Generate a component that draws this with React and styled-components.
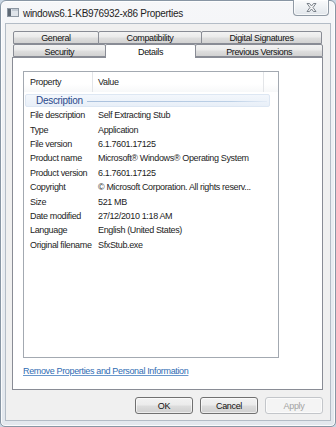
import React from "react";
import styled, { createGlobalStyle } from "styled-components";

const GlobalStyle = createGlobalStyle`
  html, body { margin: 0; padding: 0; }
  body {
    width: 336px;
    height: 427px;
    overflow: hidden;
    background: #c9d6e3;
    font-family: "Liberation Sans", Arial, sans-serif;
    font-size: 9px;
    letter-spacing: -0.35px;
    color: #1b1b1b;
  }
  * { box-sizing: border-box; }
`;

const Window = styled.div`
  width: 336px;
  height: 427px;
  border: 1px solid #8896a4;
  border-radius: 6px 6px 5px 5px;
  background: linear-gradient(180deg, #f6f7f9 0%, #eceff3 40%, #e3e8ee 100%);
  box-shadow: inset 0 0 0 1px rgba(255, 255, 255, 0.8);
  display: flex;
  flex-direction: column;
  padding: 0 4px 5px 4px;
`;

const TitleBar = styled.div`
  height: 22px;
  display: flex;
  align-items: center;
  padding-left: 2px;
  gap: 4px;
`;

const TitleText = styled.div`
  font-size: 10px;
  letter-spacing: -0.3px;
  color: #1e1e1e;
  padding-top: 2px;
`;

const CloseButton = styled.div`
  margin-left: auto;
  margin-right: 2px;
  align-self: flex-start;
  width: 36px;
  height: 16px;
  margin-top: -1px;
  border: 1px solid #909aa5;
  border-top: none;
  border-radius: 0 0 4px 4px;
  background: linear-gradient(180deg, #fafbfc 0%, #eef1f4 50%, #e1e6eb 100%);
  box-shadow: inset 0 0 0 1px rgba(255, 255, 255, 0.7);
  display: flex;
  align-items: center;
  justify-content: center;
`;

const Client = styled.div`
  flex: 1;
  display: flex;
  flex-direction: column;
  background: #f0f0f0;
  border: 1px solid #b3bcc6;
  padding: 7px 7px 6px 6px;
`;

const TabRow = styled.div`
  height: 13px;
  display: flex;
  align-items: flex-end;
  padding-left: 1px;
  position: relative;
  z-index: ${(p) => (p.$front ? 2 : 1)};
`;

const Tab = styled.div`
  width: ${(p) => p.$w}px;
  height: ${(p) => (p.$selected ? 14 : 13)}px;
  margin-left: ${(p) => (p.$first ? 0 : -1)}px;
  margin-bottom: ${(p) => (p.$selected ? -1 : 0)}px;
  border: 1px solid #898c95;
  border-bottom: ${(p) => (p.$selected ? "none" : "1px solid #898c95")};
  border-radius: 2px 2px 0 0;
  background: ${(p) =>
    p.$selected
      ? "#ffffff"
      : "linear-gradient(180deg, #f3f3f3 0%, #ebebeb 45%, #dedede 55%, #d2d2d2 100%)"};
  position: relative;
  z-index: ${(p) => (p.$selected ? 3 : 1)};
  display: flex;
  align-items: center;
  justify-content: center;
  line-height: 11px;
  padding-top: ${(p) => p.$drop}px;
  color: #111;
  white-space: nowrap;
`;

const Panel = styled.div`
  flex: 1;
  background: #ffffff;
  border: 1px solid #898c95;
  padding: 13px 10px 0 10px;
  display: flex;
  flex-direction: column;
`;

const ListView = styled.div`
  width: 256px;
  height: 287px;
  border: 1px solid #a3a9b1;
  background: #fff;
  display: flex;
  flex-direction: column;
  overflow: hidden;
`;

const HeaderRow = styled.div`
  height: 20px;
  display: grid;
  grid-template-columns: 69px 171px 1fr;
  background: linear-gradient(180deg, #ffffff 0%, #ffffff 60%, #f7f8f9 100%);
`;

const HeaderCell = styled.div`
  display: flex;
  align-items: center;
  padding-left: ${(p) => p.$pad}px;
  border-right: ${(p) => (p.$last ? "none" : "1px solid #e3e5e8")};
  color: #222;
`;

const GroupRow = styled.div`
  height: 13px;
  margin: 2px 8px 1px 1px;
  display: flex;
  align-items: center;
  padding-left: 10px;
  background: linear-gradient(180deg, #f3f7fc 0%, #e8eff8 100%);
  border: 1px solid #dde7f3;
  border-radius: 2px;
`;

const GroupTitle = styled.span`
  font-size: 10px;
  letter-spacing: -0.3px;
  color: #2a4a8c;
`;

const GroupLine = styled.div`
  flex: 1;
  height: 1px;
  margin: 1px 2px 0 4px;
  background: linear-gradient(90deg, #a9c0dc 0%, #bcd0e6 80%, rgba(188, 208, 230, 0.2) 100%);
`;

const DataRow = styled.div`
  height: 14.4px;
  display: grid;
  grid-template-columns: 69px 170px;
  align-items: center;
  white-space: nowrap;
`;

const Cell = styled.div`
  padding-left: ${(p) => p.$pad}px;
  overflow: hidden;
  color: #1d1d1d;
`;

const RemoveLink = styled.a`
  margin-top: 7px;
  line-height: 12px;
  color: #2f6cb3;
  text-decoration: underline;
  text-decoration-color: #6a98cc;
  cursor: pointer;
  align-self: flex-start;
`;

const ButtonRow = styled.div`
  margin-top: 7px;
  display: flex;
  justify-content: flex-end;
  gap: 7px;
`;

const Button = styled.button`
  width: 58px;
  height: 17px;
  padding: 0;
  font-family: inherit;
  font-size: 9px;
  letter-spacing: -0.35px;
  border-radius: 3px;
  border: 1px solid ${(p) => (p.disabled ? "#c3c6ca" : "#707070")};
  color: ${(p) => (p.disabled ? "#a3a3a3" : "#111")};
  background: ${(p) =>
    p.disabled
      ? "#f4f4f4"
      : "linear-gradient(180deg, #f2f2f2 0%, #ebebeb 48%, #dddddd 52%, #cfcfcf 100%)"};
  box-shadow: inset 0 0 0 1px rgba(255, 255, 255, 0.6);
`;

const rows = [
  ["File description", "Self Extracting Stub"],
  ["Type", "Application"],
  ["File version", "6.1.7601.17125"],
  ["Product name", "Microsoft® Windows® Operating System"],
  ["Product version", "6.1.7601.17125"],
  ["Copyright", "© Microsoft Corporation. All rights reserv..."],
  ["Size", "521 MB"],
  ["Date modified", "27/12/2010 1:18 AM"],
  ["Language", "English (United States)"],
  ["Original filename", "SfxStub.exe"],
];

const WindowIcon = () => (
  <svg width="12" height="9" viewBox="0 0 12 9">
    <rect x="0.5" y="0.5" width="11" height="8" fill="#dfe4ea" stroke="#8d97a2" />
    <rect x="1" y="1" width="3" height="7" fill="#5d6874" />
    <rect x="5" y="1" width="6" height="2" fill="#c2cad3" />
  </svg>
);

const CloseGlyph = () => (
  <svg width="11" height="9" viewBox="0 0 11 9">
    <path
      d="M1 0.5 H3.5 L5.5 3 L7.5 0.5 H10 L7 4.5 L10 8.5 H7.5 L5.5 6 L3.5 8.5 H1 L4 4.5 Z"
      fill="#f4f5f6"
      stroke="#6f7780"
      strokeWidth="0.9"
      strokeLinejoin="round"
    />
  </svg>
);

export default function App() {
  return (
    <>
      <GlobalStyle />
      <Window>
        <TitleBar>
          <WindowIcon />
          <TitleText>windows6.1-KB976932-x86 Properties</TitleText>
          <CloseButton>
            <CloseGlyph />
          </CloseButton>
        </TitleBar>
        <Client>
          <TabRow>
            <Tab $first $w={86} $drop={2}>General</Tab>
            <Tab $w={104} $drop={2}>Compatibility</Tab>
            <Tab $w={121} $drop={2}>Digital Signatures</Tab>
          </TabRow>
          <TabRow $front>
            <Tab $first $w={93} $drop={3}>Security</Tab>
            <Tab $selected $w={92} $drop={2}>Details</Tab>
            <Tab $w={128} $drop={3}>Previous Versions</Tab>
          </TabRow>
          <Panel>
            <ListView>
              <HeaderRow>
                <HeaderCell $pad={6}>Property</HeaderCell>
                <HeaderCell $pad={5}>Value</HeaderCell>
                <HeaderCell $last />
              </HeaderRow>
              <GroupRow>
                <GroupTitle>Description</GroupTitle>
                <GroupLine />
              </GroupRow>
              {rows.map(([k, v]) => (
                <DataRow key={k}>
                  <Cell $pad={6}>{k}</Cell>
                  <Cell $pad={5}>{v}</Cell>
                </DataRow>
              ))}
            </ListView>
            <RemoveLink>Remove Properties and Personal Information</RemoveLink>
          </Panel>
          <ButtonRow>
            <Button>OK</Button>
            <Button>Cancel</Button>
            <Button disabled>Apply</Button>
          </ButtonRow>
        </Client>
      </Window>
    </>
  );
}
